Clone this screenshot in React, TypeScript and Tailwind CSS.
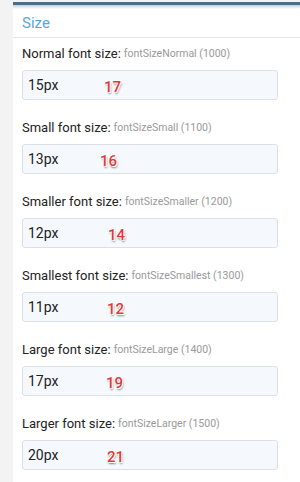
import React from 'react';

const rows = [
  { label: 'Normal font size:', hint: 'fontSizeNormal (1000)', value: '15px', mark: '17', markX: 'left-[81px]' },
  { label: 'Small font size:', hint: 'fontSizeSmall (1100)', value: '13px', mark: '16', markX: 'left-[77px]' },
  { label: 'Smaller font size:', hint: 'fontSizeSmaller (1200)', value: '12px', mark: '14', markX: 'left-[85px]' },
  { label: 'Smallest font size:', hint: 'fontSizeSmallest (1300)', value: '11px', mark: '12', markX: 'left-[84px]' },
  { label: 'Large font size:', hint: 'fontSizeLarge (1400)', value: '17px', mark: '19', markX: 'left-[83px]' },
  { label: 'Larger font size:', hint: 'fontSizeLarger (1500)', value: '20px', mark: '21', markX: 'left-[84px]' },
];

const App: React.FC = () => {
  return (
    <div className="flex w-[300px] h-[482px] overflow-hidden bg-[#f3f3f3] font-['Roboto',sans-serif]">
      <div className="w-[13px] shrink-0" />
      <div className="flex-1 mt-[2px] bg-white border-t-[3px] border-[#4f6d84]">
        <div className="h-[4px] bg-gradient-to-b from-[#c8cdd1] to-white" />
        <div className="h-[29px] flex items-center px-[9px] border-b border-[#e6e6e6]">
          <span className="text-[15px] text-[#55a8dd]">Size</span>
        </div>
        <div className="px-[9px] pt-[7px]">
          {rows.map((r) => (
            <div key={r.hint} className="pb-[19px]">
              <div className="h-[18px] flex items-center gap-[3px] whitespace-nowrap">
                <span className="text-[13px] text-[#222]">{r.label}</span>
                <span className="text-[10.5px] text-[#999]">{r.hint}</span>
              </div>
              <div className="relative mt-[7px] h-[30px] w-[256px] rounded-[3px] border border-[#dcdfe3] bg-[#f5f9fd] flex items-center px-[5px]">
                <span className="text-[14px] text-[#222]">{r.value}</span>
                <span
                  className={`absolute ${r.markX} top-[5px] text-[15px] font-medium text-[#e0383a] [text-shadow:-1px_0_0_#fff,0_-1px_0_#fff,1px_1px_0_#fff,1px_2px_2px_rgba(0,0,0,0.5)]`}
                >
                  {r.mark}
                </span>
              </div>
            </div>
          ))}
        </div>
      </div>
    </div>
  );
};

export default App;
